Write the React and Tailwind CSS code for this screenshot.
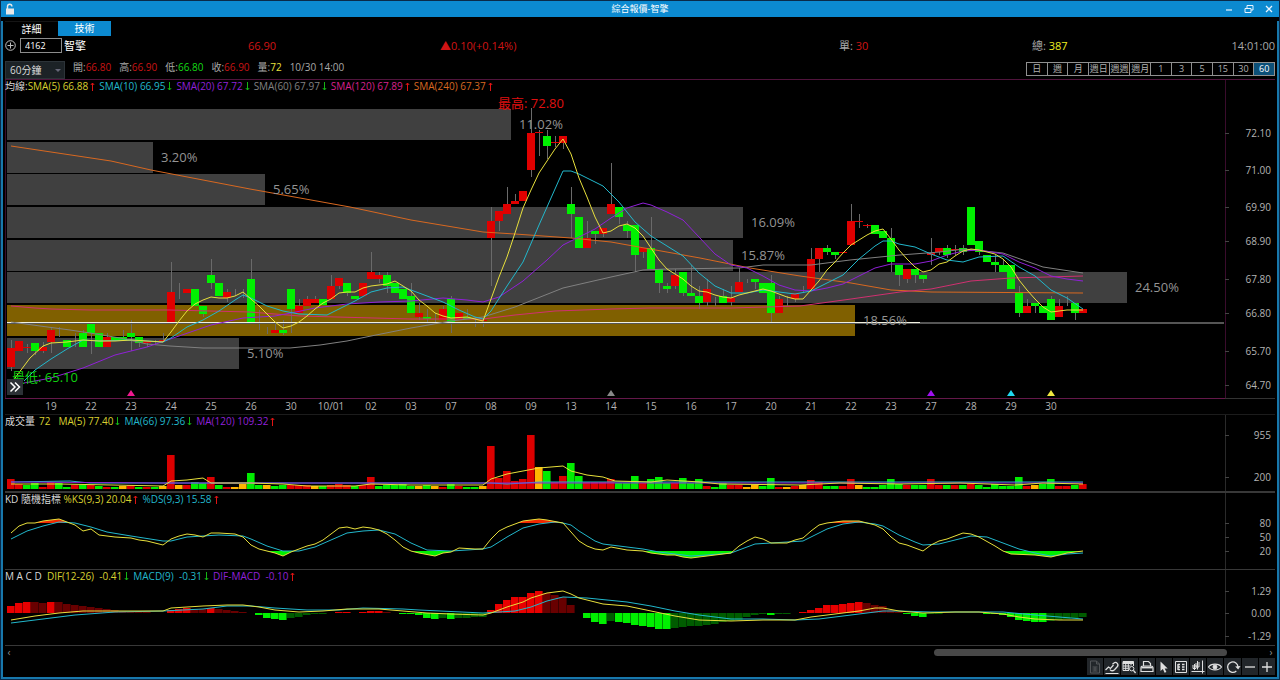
import { useState } from 'react'

const RED = '#e00000'
const GREEN = '#00f000'
const YELLOW = '#e8e03c'
const CYAN = '#22b8cc'
const PURPLE = '#9020d8'

const PERIODS = ['日', '週', '月', '週日', '週週', '週月', '1', '3', '5', '15', '30', '60']

const QUOTES = [
  { label: '開', value: '66.80', color: 'text-[#c81414]' },
  { label: '高', value: '66.90', color: 'text-[#c81414]' },
  { label: '低', value: '66.80', color: 'text-[#14d814]' },
  { label: '收', value: '66.90', color: 'text-[#c81414]' },
  { label: '量', value: '72', color: 'text-[#e8e03c]' },
]

const SMA_LEGEND = [
  { text: 'SMA(5) 66.88', color: 'text-[#d8d030]', up: true },
  { text: 'SMA(10) 66.95', color: 'text-[#22b8cc]', up: false },
  { text: 'SMA(20) 67.72', color: 'text-[#9020d8]', up: false },
  { text: 'SMA(60) 67.97', color: 'text-[#808080]', up: false },
  { text: 'SMA(120) 67.89', color: 'text-[#d8208c]', up: true },
  { text: 'SMA(240) 67.37', color: 'text-[#d86820]', up: true },
]

const VOL_LEGEND = [
  { text: 'MA(5) 77.40', color: 'text-[#d8d030]', up: false },
  { text: 'MA(66) 97.36', color: 'text-[#22b8cc]', up: false },
  { text: 'MA(120) 109.32', color: 'text-[#9020d8]', up: true },
]

const KD_LEGEND = [
  { text: '%KS(9,3) 20.04', color: 'text-[#d8d030]', up: true },
  { text: '%DS(9,3) 15.58', color: 'text-[#22b8cc]', up: true },
]

const MACD_LEGEND = [
  { text: 'DIF(12-26)  -0.41', color: 'text-[#d8d030]', up: false },
  { text: 'MACD(9)  -0.31', color: 'text-[#22b8cc]', up: false },
  { text: 'DIF-MACD  -0.10', color: 'text-[#9020d8]', up: true },
]

const DATES = ['19', '22', '23', '24', '25', '26', '30', '10/01', '02', '03', '07', '08', '09', '13', '14', '15', '16', '17', '20', '21', '22', '23', '27', '28', '29', '30']

// price bands: top, right edge, share
const BANDS = [
  [109, 511, '11.02%'],
  [142, 153, '3.20%'],
  [174, 265, '5.65%'],
  [207, 743, '16.09%'],
  [240, 733, '15.87%'],
  [272, 1127, '24.50%'],
  [305, 855, '18.56%'],
  [338, 239, '5.10%'],
]

// color, body top, body bottom, wick top, wick bottom
const CANDLES = `r 348 367 340 371,r 341 351 341 351,r 347 348 344 353,g 343 351 343 355,r 347 351 342 353,r 330 342 328 353,r 332 332 327 337,g 340 347 340 347,r 341 341 333 347,g 333 347 330 347,
g 323 333 323 354,g 333 347 333 347,r 337 347 333 347,g 337 340 337 340,g 337 340 330 340,g 333 337 320 351,g 337 343 337 347,r 341 343 341 347,r 342 342 340 345,r 340 341 333 342,
r 292 322 262 322,r 291 291 283 299,r 289 293 289 293,g 289 306 289 306,g 306 314 306 317,g 275 283 259 289,g 283 296 283 296,r 292 298 289 302,r 292 292 289 296,r 292 292 289 298,
g 279 322 259 322,r 312 312 310 330,r 330 330 327 334,r 330 333 323 333,g 330 333 320 335,g 289 309 289 333,r 306 313 299 313,r 299 306 296 306,r 299 303 296 303,g 299 305 299 305,
r 286 299 275 299,r 278 286 278 289,g 283 293 283 296,g 296 299 296 299,r 283 296 283 296,r 272 279 252 279,r 275 279 272 283,g 275 286 272 293,g 283 293 283 293,g 289 299 289 299,
g 296 313 283 313,r 313 317 303 320,g 317 319 309 322,r 319 319 313 322,r 309 320 306 320,g 299 323 296 333,r 313 320 313 320,g 317 319 309 319,r 320 320 317 327,r 320 321 320 327,
r 221 238 207 286,r 211 221 211 231,r 204 214 187 214,r 201 204 194 204,r 191 201 191 201,r 133 170 108 177,r 132 133 130 156,g 136 146 130 159,r 142 143 136 147,r 136 143 136 149,
g 204 214 187 238,g 217 248 217 248,r 238 248 221 248,g 231 234 231 244,r 228 234 228 237,r 204 214 163 214,g 207 217 207 224,g 225 231 221 238,g 225 255 225 272,r 248 252 248 258,
g 248 269 217 269,g 269 283 269 293,g 286 289 283 293,r 275 286 269 289,g 272 293 272 296,g 293 296 265 296,g 296 303 286 309,r 289 302 279 306,r 300 300 297 306,g 296 303 289 303,
r 298 302 286 306,r 282 292 268 292,r 282 282 279 283,g 279 282 279 289,g 283 293 283 293,g 283 313 275 323,r 299 313 296 313,r 300 300 296 306,r 293 299 293 302,r 290 290 286 293,
r 259 289 248 289,r 248 259 248 272,g 248 252 245 255,g 252 255 252 259,r 252 253 252 253,r 221 245 204 245,r 221 222 214 228,r 225 226 224 228,g 225 234 225 234,g 231 238 231 238,
g 238 262 228 272,g 265 275 265 286,r 269 279 269 283,g 269 275 269 283,g 275 279 275 283,r 253 255 238 265,r 248 252 248 255,g 248 255 245 258,r 249 250 245 255,g 248 252 245 255,
g 207 245 207 245,g 241 252 241 255,g 255 262 255 262,g 262 265 255 272,g 265 272 260 272,g 265 289 265 289,g 293 313 286 317,r 306 313 299 313,g 303 306 303 313,g 306 313 306 313,
g 299 320 296 320,r 306 317 299 317,r 302 302 296 306,g 303 313 303 320,r 309 313 309 313`
  .split(',')
  .map(row => {
    const [color, ...ys] = row.trim().split(' ')
    return { color: color === 'r' ? RED : GREEN, ys: ys.map(Number) }
  })

const VOLUMES = `10r 5r 4g 6g 2r 7r 6g 2g 4r 4g 4r 3g 2r 2g 3y 4r 2g 2r 2g 3y
34r 4y 4r 7g 6g 12r 4g 2r 2y 5y 16g 4g 4y 3g 4g 4r 4r 4r 3y 3g
4r 5r 4r 3g 4r 12r 3g 4g 4g 5g 3g 3y 4g 3y 2r 5g 3r 2g 2g 3y
43r 11r 18r 8r 10r 54r 22y 18g 7r 13r 26g 13g 7r 7r 7r 10r 6g 6g 13g 6r
10g 12g 6g 6r 11g 6g 10g 3r 2g 6g 4r 4r 2y 4y 3g 11g 2r 2y 3r 4y
9r 7r 3g 3g 3r 10r 4y 2g 2g 4g 10g 5g 4r 4g 4g 10r 4r 4g 4r 4g
5r 4g 2g 5g 3g 3g 12g 3r 4y 5g 10g 3r 3r 4g 5r`.split(/\s+/)

// DIF - MACD, one value per bar
const HISTOGRAM = [
  7, 10, 11, 10.9, 10, 11, 10.9, 9, 8, 7, 6, 5, 4, 3, 2, 1.5, 1, 1, 0, 0,
  3, 4, 5, 4, 3.9, 5, 4, 3, 2, 1, 0, -2, -5, -6, -7, -5, -4, -2, -1, -0.9,
  0, 1, 1.1, 0, 1, 2, 2.1, 1, 0, -1, -1.1, -2, -5, -6, -5, -6, -5, -4.9, -4, -3.9,
  3, 9, 13, 16, 16.1, 20, 22, 20, 18, 16, 8, 0, -5, -9, -11, -8, -9, -10, -12, -13,
  -14, -16, -16.1, -15, -14, -13, -12.9, -12, -11, -9, -8, -7, -4, -2, -1, -2, -1, -0.9, 0, 1,
  3, 5, 8, 8.1, 9, 10, 11, 10, 8, 7, 3, 1, -1, -3, -4, -1, -0.5, 0, 0, 0,
  0, 0, -1, -1.1, -2, -4, -7, -8, -9, -9.1, -8, -7, -6, -5, -4,
]

const SMA5 = '12,382 15,378 30,358 43,346 51,343 67,342 83,340 99,341 115,341 131,340 147,341 163,342 171,332 179,321 187,311 195,304 203,300 211,297 219,298 227,298 235,296 243,292 251,299 259,306 267,314 275,322 283,328 291,326 299,322 307,316 315,309 323,303 331,299 339,293 347,292 355,292 363,288 371,286 387,284 395,281 403,286 411,291 419,300 427,306 435,313 443,316 451,318 467,317 475,319 483,321 491,299 499,277 507,257 515,233 523,208 531,190 539,173 547,161 555,149 563,139 571,154 579,178 587,197 595,217 603,233 611,231 619,226 627,224 635,228 643,236 651,248 659,260 667,269 675,274 683,279 691,286 699,291 707,292 715,295 723,297 731,298 739,295 747,293 755,291 763,289 771,291 779,294 787,297 795,299 803,299 811,290 819,281 827,270 835,262 843,253 851,245 859,240 867,235 875,231 883,229 891,239 899,250 907,259 915,267 923,272 931,270 939,264 947,262 955,256 963,251 971,249 979,250 987,252 995,254 1003,259 1011,267 1019,280 1027,290 1035,299 1043,307 1051,312 1059,311 1067,310 1075,310 1083,310'
const SMA10 = '24,381 35,370 51,359 67,349 83,340 99,341 131,340 163,342 171,338 187,327 203,320 219,311 235,300 243,295 251,298 267,306 283,311 299,314 327,315 339,309 355,301 371,292 387,288 403,287 411,290 427,296 443,302 459,310 475,317 483,319 491,311 507,286 523,262 539,225 555,189 563,171 571,171 579,174 595,182 603,186 619,202 635,222 651,236 667,246 683,256 699,273 715,286 731,293 747,293 763,290 779,292 795,294 811,291 827,283 843,275 859,259 875,246 883,241 891,241 899,244 915,247 931,254 947,260 963,262 979,257 1003,256 1019,267 1035,276 1051,290 1067,298 1083,309'
const SMA20 = '24,383 35,381 51,378 83,368 115,355 147,347 179,336 211,325 243,318 275,316 291,313 315,308 347,304 379,302 411,301 443,298 467,300 483,302 499,297 523,281 547,260 563,245 579,237 595,229 611,218 627,208 643,203 651,205 667,212 683,220 699,237 715,254 731,265 747,268 763,276 779,285 795,290 811,291 827,288 843,284 859,276 875,268 891,264 915,264 931,261 947,255 963,251 979,250 1003,254 1019,262 1035,268 1051,276 1067,279 1083,281'
const SMA60 = '11,322 40,326 70,330 90,333 120,338 147,344 170,346 203,348 290,348 320,345 347,341 371,336 411,328 451,321 483,317 515,307 563,288 611,277 643,270 667,269 739,268 763,265 811,265 850,260 900,255 940,252 965,249 1003,253 1043,267 1083,273'
const SMA120 = '11,306 35,308 51,309 90,310 170,310 250,312 300,316 411,319 483,319 515,315 555,311 611,309 650,308 731,308 800,306 851,299 900,292 931,289 971,281 1011,278 1083,276'
const SMA240 = '11,146 51,152 111,161 151,170 203,180 250,189 300,198 350,207 411,220 483,232 515,234 571,238 611,242 650,249 700,258 750,268 800,276 851,283 891,290 931,292 1083,293'

const K_LINE = '11,533 19,526 27,523 35,523 43,521 51,520 59,519 67,522 75,525 83,531 91,529 99,535 115,537 131,538 139,540 147,541 163,545 171,539 179,536 187,534 195,535 203,537 211,533 219,533 235,534 243,537 251,545 259,549 267,551 275,553 283,556 291,552 299,549 307,546 315,544 323,540 331,534 339,528 347,527 355,529 363,527 371,528 379,530 387,534 395,540 403,547 411,551 419,553 435,556 443,553 451,552 459,548 475,549 483,549 491,539 499,531 507,527 515,524 523,521 539,519 547,520 563,523 571,532 579,541 587,546 595,549 603,550 611,547 627,550 643,551 651,553 667,555 675,555 683,557 691,558 699,557 715,555 731,553 739,546 747,541 755,537 763,539 771,543 787,543 795,540 803,538 811,531 819,525 827,523 843,521 859,521 867,523 875,525 883,529 891,537 899,543 907,545 915,548 923,551 931,545 939,541 947,539 963,533 971,534 979,537 995,546 1003,551 1011,554 1035,555 1051,557 1067,553 1083,551'
const D_LINE = '11,539 27,531 43,526 59,522 75,523 91,527 107,532 131,536 163,541 171,541 187,537 203,536 219,535 243,536 251,539 267,546 283,551 299,551 315,547 331,540 347,533 363,531 379,530 395,534 411,543 427,550 451,551 483,549 491,547 507,537 523,528 539,524 555,522 563,523 571,525 579,531 595,541 603,544 627,547 643,549 659,552 675,554 691,556 707,555 731,553 747,547 755,544 771,543 787,542 803,541 811,537 827,529 843,524 859,522 875,524 883,526 899,535 915,542 923,545 939,544 955,540 971,536 987,537 1003,543 1019,549 1035,553 1051,556 1067,554 1083,553'

const DIF_LINE = '11,620 35,616 59,613 83,611 163,611 171,608 203,606 227,605 243,605 259,607 275,610 299,612 323,611 347,609 379,609 403,611 427,613 451,614 483,615 491,613 507,607 523,602 531,598 547,593 563,591 571,594 579,598 603,604 627,606 651,611 675,616 699,620 731,621 763,620 795,620 811,617 843,613 859,611 875,608 883,608 899,611 923,613 955,612 979,612 1003,614 1019,617 1035,619 1059,620 1083,620'
const MACD_LINE = '11,623 35,620 75,615 115,612 163,611 203,609 227,606 251,606 275,608 307,610 339,610 363,608 403,609 419,610 483,613 515,611 531,607 547,601 563,597 587,598 627,602 651,606 675,611 699,615 731,619 763,619 795,620 819,619 843,616 859,614 883,611 899,611 931,612 963,612 1003,612 1035,615 1083,619'

const centerX = i => 11 + 8 * i

function Arrow({ up }) {
  return (
    <svg viewBox="0 0 5 9" className={`ml-0.5 h-[9px] w-[5px] ${up ? 'text-[#e01414]' : 'text-[#14b414]'}`} fill="none" stroke="currentColor">
      {up ? <path d="M2.500 9V1M.8 3 2.500 1l1.700 2" /> : <path d="M2.500 0v8M.8 6l1.700 2 1.700-2" />}
    </svg>
  )
}

function Legend({ title, items }) {
  return (
    <div className="absolute left-0 top-0 flex h-3 items-center whitespace-pre text-[10px] leading-3">
      <span className="text-[#d8d8d8]">{title}</span>
      <div className="flex gap-1">
        {items.map(item => (
          <span key={item.text} className={`flex items-center ${item.color}`}>{item.text}<Arrow up={item.up} /></span>
        ))}
      </div>
    </div>
  )
}

function Line({ points, color }) {
  return <polyline points={points} fill="none" stroke={color} strokeWidth="1" />
}

function Axis({ top, bottom, ticks, color = '#2a2a2a' }) {
  return (
    <g>
      <path d={`M1225.500 ${top}V${bottom}`} stroke={color} />
      {ticks.map(([y, label]) => (
        <g key={label}>
          <path d={`M1225 ${y + 0.5}h4`} stroke="#444" />
          <text x="1271" y={y + 4} textAnchor="end" fontSize="10" fill="#b4b4b4">{label}</text>
        </g>
      ))}
    </g>
  )
}

function PricePanel() {
  return (
    <section className="relative border-b border-[#1c1c1c]">
      <svg viewBox="5 80 1270 334" className="block w-full">
        <path d="M5.500 80V398" stroke="#3a0c2c" />
        <g shapeRendering="crispEdges">
          {BANDS.map(([y, right, label]) => (
            <rect key={label} x="7" y={y} width={right - 7} height="31" fill={label === '18.56%' ? '#806000' : '#404040'} />
          ))}
          {CANDLES.map(({ color, ys: [top, bottom, high, low] }, i) => (
            <g key={i}>
              <rect x={centerX(i)} y={high} width="1" height={low - high} fill="#6a6a6a" />
              <rect x={centerX(i) - 4} y={top} width="8" height={bottom - top} fill={color} />
            </g>
          ))}
          <rect x="7" y="322" width="1217" height="2" fill="#555" />
          <rect x="7" y="322" width="913" height="1" fill="#f0f0e0" />
        </g>
        <Line points={SMA240} color="#d86820" />
        <Line points={SMA120} color="#d03070" />
        <Line points={SMA60} color="#808080" />
        <Line points={SMA20} color={PURPLE} />
        <Line points={SMA10} color={CYAN} />
        <Line points={SMA5} color={YELLOW} />
        {BANDS.map(([y, right, label]) => (
          <text key={label} x={right + 8} y={y + 20} fontSize="13" fill="#949494">{label}</text>
        ))}
        <text x="498" y="108" fontSize="13" fill="#e01010">最高: 72.80</text>
        <text x="12" y="382" fontSize="13" fill="#10d010">最低: 65.10</text>
        {[[131, '#f01890'], [611, '#888'], [931, '#a010f0'], [1011, '#20d8f0'], [1051, '#f0e840']].map(([x, fill]) => (
          <path key={x} d={`M${x} 390l4 6h-8z`} fill={fill} />
        ))}
        <path d="M5 398.500H1225" stroke="#64184a" />
        <path d="M1225 398.500H1275" stroke="#333" />
        {DATES.map((date, i) => (
          <text key={i} x={51 + 40 * i} y="410" textAnchor="middle" fontSize="10" fill="#b4b4b4">{date}</text>
        ))}
        <Axis
          top={80}
          bottom={398}
          color="#3a0c2c"
          ticks={[[133, '72.10'], [170, '71.00'], [207, '69.90'], [241, '68.90'], [279, '67.80'], [313, '66.80'], [351, '65.70'], [385, '64.70']]}
        />
      </svg>
      <Legend title="均線:" items={SMA_LEGEND} />
      <button aria-label="展開" className="absolute bottom-[19px] left-0.5 flex size-4 items-center justify-center bg-[#2c3136] text-white">
        <svg viewBox="0 0 16 16" className="size-4" fill="none" stroke="currentColor" strokeWidth="1.500"><path d="M3.500 3.500 8 8l-4.500 4.500M8 3.500 12.500 8 8 12.500" /></svg>
      </button>
    </section>
  )
}

function VolumePanel() {
  const colors = { r: '#dc0000', g: '#00ec00', y: '#ffb400' }
  return (
    <section className="relative border-b-2 border-[#383838]">
      <svg viewBox="5 415 1270 76" className="block w-full">
        <g shapeRendering="crispEdges">
          {VOLUMES.map((v, i) => (
            <g key={i}>
              <rect x={centerX(i) - 4} y={489 - parseInt(v)} width="8" height={parseInt(v)} fill={colors[v.slice(-1)]} />
              <rect x={centerX(i) + 3} y={489 - parseInt(v)} width="1" height={parseInt(v)} fill="#000" fillOpacity=".4" />
            </g>
          ))}
        </g>
        <Line points="11,482 70,481 90,483 163,483 491,483 507,484 540,482 760,482 1083,482" color={CYAN} />
        <Line points="11,482 163,483 491,483 640,483 1083,483" color={PURPLE} />
        <Line points="11,484 60,484 163,486 171,481 187,480 203,478 211,483 250,483 283,484 307,486 355,486 371,484 411,485 483,485 491,479 507,474 523,471 539,468 563,466 571,471 587,475 603,477 615,481 651,482 667,480 700,482 720,484 800,485 840,483 900,484 960,483 1015,485 1043,483 1083,484" color={YELLOW} />
        <Axis top={415} bottom={491} ticks={[[435, '955'], [477, '200']]} />
      </svg>
      <Legend title={<>成交量<span className="pl-1 pr-2 text-[#d8d030]">72</span></>} items={VOL_LEGEND} />
    </section>
  )
}

function KdPanel() {
  return (
    <section className="relative border-b border-[#383838]">
      <svg viewBox="5 493 1270 76" className="block w-full">
        <clipPath id="overbought"><rect x="5" y="493" width="1220" height="30" /></clipPath>
        <clipPath id="oversold"><rect x="5" y="551" width="1220" height="18" /></clipPath>
        <polygon points={`11,523 ${K_LINE} 1083,523`} fill="#f02800" clipPath="url(#overbought)" />
        <polygon points={`11,551 ${K_LINE} 1083,551`} fill="#00f000" clipPath="url(#oversold)" />
        <Line points={D_LINE} color={CYAN} />
        <Line points={K_LINE} color={YELLOW} />
        <Axis top={493} bottom={569} ticks={[[523, '80'], [537, '50'], [551, '20']]} />
      </svg>
      <Legend title="KD 隨機指標 " items={KD_LEGEND} />
    </section>
  )
}

function MacdPanel() {
  const barColor = (v, i) => {
    const growing = i === 0 || Math.abs(v) > Math.abs(HISTOGRAM[i - 1]) || v * HISTOGRAM[i - 1] < 0
    if (v > 0) return growing ? '#e80000' : '#680000'
    return growing ? '#00f000' : '#005c00'
  }
  return (
    <section className="relative border-b border-[#383838]">
      <svg viewBox="5 570 1270 75" className="block w-full">
        <g shapeRendering="crispEdges">
          {HISTOGRAM.map((v, i) => (
            <g key={i}>
              <rect x={centerX(i) - 4} y={613 - Math.max(v, 0)} width="8" height={Math.abs(v)} fill={barColor(v, i)} />
              <rect x={centerX(i) + 3} y={613 - Math.max(v, 0)} width="1" height={Math.abs(v)} fill="#000" fillOpacity=".4" />
            </g>
          ))}
        </g>
        <Line points={MACD_LINE} color={CYAN} />
        <Line points={DIF_LINE} color={YELLOW} />
        <Axis top={570} bottom={645} ticks={[[591, '1.29'], [613, '0.00'], [636, '-1.29']]} />
      </svg>
      <Legend title="M A C D  " items={MACD_LEGEND} />
    </section>
  )
}

const TOOLS = [
  { name: '報表', icon: <g opacity=".25"><path d="M3.500 2h6l3 3v9h-9zM9.500 2v3h3" /><path d="M5.500 8h5M5.500 10h5M5.500 12h5M8 8v4" /></g> },
  { name: '畫線', icon: <><path d="M1.500 14.500h13" /><path d="m1.500 11 3-3 2 1.500L9.500 6" strokeWidth="1.200" /><path d="M6 10.500c1 1.800 3 1.500 4.500.2l2.700-2.900c2-2.300-.7-5.800-3.500-3.600L8.500 5.300" strokeWidth="1.300" /></> },
  { name: '查價', icon: <><path d="M2 2.500h10.500v2H2z" fill="currentColor" /><path d="M2 4v7.500h6M12.500 4v3M2 7h7M2 9.300h5.500M4.700 4v7.500M7.300 4v7.500M10 4v2.500" /><circle cx="10.700" cy="9.700" r="2.200" /><path d="m12.400 11.400 2.200 2.600" strokeWidth="1.400" /></> },
  { name: '列印', icon: <><path d="M4.500 7V2.500h5l2 2V7M2 12.500V9c0-1.300.7-2 2-2h8c1.300 0 2 .7 2 2v3.500z" strokeWidth="1.200" /><path d="M2.500 8.500h11" strokeWidth="1.800" /></> },
  { name: '游標', icon: <path d="M4.500 2.500v9.500l2.400-2 1.700 3.800 1.800-.8-1.700-3.600h3z" fill="currentColor" stroke="none" /> },
  { name: '欄位', icon: <><path d="M2.500 2.500h11v11h-11z" /><path d="M5 5v6M5 5.500h2M5 8h2M5 10.500h2M9 5.500h2.500M9 8h2.500M9 10.500h2.500" strokeWidth="1.400" /></> },
  { name: '指標', icon: <path d="M4.500 5v6M3 6v3.500h3V6M7.500 2v8.500M6 4v4h3V3M12.500 1.500v13M1.500 12.500h13" strokeWidth="1" /> },
  { name: '顯示', icon: <><path d="M1.500 8C4 4.200 12 4.200 14.500 8 12 11.800 4 11.800 1.500 8z" strokeWidth="1.200" /><circle cx="8" cy="8" r="2" fill="currentColor" /></> },
  { name: '重新整理', icon: <><path d="M11.300 12a5.200 5.200 0 1 1 1.700-4" strokeWidth="1.300" /><path d="m10.200 7.500 5.300-.5-2.300 3.500z" fill="currentColor" stroke="none" /></> },
  { name: '縮小', icon: <path d="M3 8h10" strokeWidth="1.300" /> },
  { name: '放大', icon: <path d="M3 8h10M8 3v10" strokeWidth="1.300" /> },
]

export default function App() {
  const [tab, setTab] = useState('技術')
  const [period, setPeriod] = useState('60')
  const [symbol, setSymbol] = useState('4162')

  return (
    <div className="border border-[#0a2a48] bg-black font-['Open_Sans','Noto_Sans_CJK_TC',sans-serif] text-[10px] text-[#a8a8a8]">
      <header className="grid h-4 grid-cols-3 items-center bg-[#0c8ad0] px-1 text-white">
        <svg viewBox="0 0 10 12" className="h-3 w-2.5" fill="none" stroke="#e8e8e8" strokeWidth="1.400">
          <path d="M2.500 6V3.500a2.200 2.200 0 0 1 4.400 0" />
          <path d="M1 5.500h8v6H1z" fill="#e8e8e8" stroke="none" />
        </svg>
        <h1 className="text-center text-[9px] leading-3">綜合報價-智擎</h1>
        <div className="flex justify-end gap-2">
          <button aria-label="最小化" className="w-3"><svg viewBox="0 0 12 12" className="size-3" stroke="#e8f4ff" strokeWidth="1.200"><path d="M3 7h6" /></svg></button>
          <button aria-label="還原" className="w-3"><svg viewBox="0 0 12 12" className="size-3" fill="none" stroke="#e8f4ff"><path d="M2 5.500h6v4H2zM4 5.500v-3h6v4.500H8" /></svg></button>
          <button aria-label="關閉" className="w-3"><svg viewBox="0 0 12 12" className="size-3" stroke="#e8f4ff" strokeWidth="1.300"><path d="m3 3 6 6M9 3l-6 6" /></svg></button>
        </div>
      </header>

      <main className="border-x-2 border-b-2 border-[#1878ac] px-0.5 pb-0.5">
        <nav className="mt-1 flex h-[15px]">
          {['詳細', '技術'].map(t => (
            <button key={t} onClick={() => setTab(t)} className={`w-[53px] leading-[15px] text-white ${tab === t ? 'bg-[#0c8ad0]' : 'border-t border-[#151515]'}`}>{t}</button>
          ))}
        </nav>

        <div className="mt-0.5 grid h-[15px] grid-cols-[243fr_192fr_399fr_193fr_243fr] items-center text-[11px] leading-[15px]">
          <div className="flex items-center">
            <button aria-label="新增" className="mr-1">
              <svg viewBox="0 0 11 11" className="size-[11px]" fill="none" stroke="#c0c0c0"><circle cx="5.500" cy="5.500" r="4.800" /><path d="M2.500 5.500h6M5.500 2.500v6" /></svg>
            </button>
            <input aria-label="股票代號" value={symbol} onChange={e => setSymbol(e.target.value)} className="h-[15px] w-[42px] border border-[#8c8c8c] bg-black px-1 text-[9px] text-white" />
            <span className="ml-0.5 text-[11px] text-white">智擎</span>
          </div>
          <span className="text-[#d01414]">66.90</span>
          <span className="text-[#d01414]">▲0.10(+0.14%)</span>
          <span>單: <span className="text-[#d01414]">30</span></span>
          <div className="flex justify-between">
            <span>總: <span className="text-[#f0f020]">387</span></span>
            <time>14:01:00</time>
          </div>
        </div>

        <div className="mt-2 flex h-[18px]">
          <div className="relative">
            <select aria-label="週期" className="h-[18px] w-[60px] appearance-none border border-[#2c3338] bg-[#1c2226] pl-1 text-[10px] text-[#d8d8d8]">
              <option>60分鐘</option>
            </select>
            <svg viewBox="0 0 6 4" className="pointer-events-none absolute right-1 top-2 h-1 w-1.5" fill="#667"><path d="M0 0h6L3 3z" /></svg>
          </div>
          <div className="ml-2 flex gap-2 leading-3">
            {QUOTES.map(q => (
              <span key={q.label}>{q.label}:<span className={q.color}>{q.value}</span></span>
            ))}
            <span>10/30 14:00</span>
          </div>
          <div className="ml-auto mt-px grid h-[14px] w-[249px] grid-cols-12 border-l border-[#909090] text-[9px] leading-3">
            {PERIODS.map(p => (
              <button
                key={p}
                onClick={() => setPeriod(p)}
                className={`whitespace-nowrap border-y border-r border-[#909090] ${period === p ? 'bg-[#0c5078] text-white' : 'text-[#b0b0b0]'}`}
              >
                {p}
              </button>
            ))}
          </div>
        </div>

        <div className="border-t border-[#50143c]">
          <PricePanel />
          <VolumePanel />
          <KdPanel />
          <MacdPanel />
        </div>

        <div className="flex h-3 items-center justify-between text-[#909090]">
          <button aria-label="向左捲動" className="w-2 leading-3">‹</button>
          <div className="flex flex-1 pl-[72.500%] pr-10">
            <div className="h-[7px] w-full rounded-full bg-[#484848]" />
          </div>
          <button aria-label="向右捲動" className="w-2 leading-3">›</button>
        </div>

        <div className="ml-auto grid h-[17px] w-[188px] grid-cols-11 gap-px">
          {TOOLS.map(tool => (
            <button key={tool.name} aria-label={tool.name} className="flex items-center justify-center bg-[#22262a] text-[#e0e0e0]">
              <svg viewBox="0 0 16 16" className="size-4" fill="none" stroke="currentColor">{tool.icon}</svg>
            </button>
          ))}
        </div>
      </main>
    </div>
  )
}
